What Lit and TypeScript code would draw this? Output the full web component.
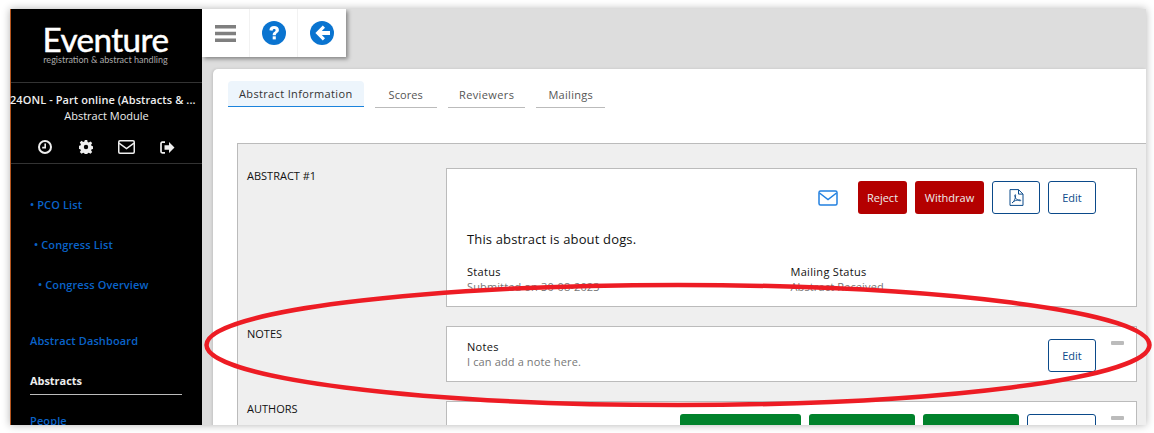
import { LitElement, html, css } from "lit";
import { customElement } from "lit/decorators.js";

const envelope = html`<svg viewBox="0 0 20 16" width="20" height="16"><rect x="1" y="1" width="18" height="14" rx="1.5" fill="none" stroke="currentColor" stroke-width="1.5"/><path d="M1.5 3 L10 9.5 L18.5 3" fill="none" stroke="currentColor" stroke-width="1.5"/></svg>`;

@customElement("app-root")
export class AppRoot extends LitElement {
  static styles = css`
    :host { display: block; width: 1154px; height: 433px; background: #fff; font-family: "Open Sans", sans-serif; font-size: 11px; color: #222; position: relative; overflow: hidden; }
    .window { position: absolute; left: 10px; top: 9px; width: 1136px; height: 416px; display: flex; overflow: hidden; box-shadow: 0 0 8px rgba(0,0,0,.3); background: #ddd; }
    .side { width: 192px; flex: none; background: #000; color: #fff; border-left: 1px solid #b5561f; box-sizing: border-box; display: flex; flex-direction: column; }
    .logo { flex: none; height: 74px; box-sizing: border-box; padding-top: 15px; padding-right: 2px; display: flex; flex-direction: column; align-items: center; border-bottom: 1px solid #333; }
    .logo b { font: 400 33.2px/30px Lato, sans-serif; letter-spacing: -.55px; color: #fff; -webkit-text-stroke: .5px #fff; }
    .logo span { font: 400 9.05px/11px Lato, sans-serif; color: #aaa; }
    .ctx { flex: none; text-align: center; padding-top: 9px; line-height: 16px; font-size: 11px; color: #eee; height: 81px; box-sizing: border-box; border-bottom: 1px solid #333; }
    .ctx .t { font-weight: 600; white-space: nowrap; margin: 0 8px 0 -1px; letter-spacing: .08px; }
    .tools { display: flex; justify-content: center; gap: 25px; align-items: center; margin-top: 14px; height: 18px; color: #eee; }
    .tools svg:first-child { margin-right: 2px; }
    nav { display: flex; flex-direction: column; padding: 33px 0 0 19px; font-weight: 600; font-size: 11px; color: #0a63c9; line-height: 16px; letter-spacing: .12px; }
    nav a { display: block; margin-bottom: 24px; white-space: nowrap; }
    nav a.i1 { padding-left: 4px; }
    nav a.i2 { padding-left: 8px; margin-bottom: 40px; }
    nav a.cur { color: #eee; font-weight: 700; width: 152px; padding-bottom: 5px; border-bottom: 1px solid #bbb; margin-bottom: 18px; letter-spacing: -.05px; }
    main { flex: 1; min-width: 0; position: relative; }
    .toolbar { width: 144px; height: 48px; background: #fff; display: flex; box-shadow: 2px 2px 4px rgba(0,0,0,.4); position: relative; }
    .toolbar div { width: 48px; display: flex; align-items: center; justify-content: center; border-right: 1px solid #f2f2f2; box-sizing: border-box; }
    .toolbar div:last-child { border-right: none; }
    .panel { margin: 12px 0 0 11px; height: 400px; background: #fff; border-radius: 5px 0 0 0; padding: 12px 0 0 15px; box-sizing: border-box; box-shadow: -1px 0 3px rgba(0,0,0,.12); }
    .tabs { display: flex; gap: 11px; color: #555; align-items: flex-start; letter-spacing: .1px; }
    .tab { height: 27px; padding: 0 14px; display: flex; align-items: center; border-bottom: 1px solid #bbb; box-sizing: border-box; }
    .tab.rv { padding: 0 11px; letter-spacing: .4px; }
    .tab.ml { padding: 0 12px; letter-spacing: .3px; }
    .tab.on { background: #edf5fc; border-bottom-color: #1b83dc; border-radius: 4px 4px 0 0; color: #333; font-weight: 500; padding: 0 11px 1px; height: 26px; letter-spacing: .35px; }
    .box { margin: 35px 0 0 9px; background: #efefef; border: 1px solid #bbb; border-right: none; padding: 24px 9px 0 9px; display: flex; flex-direction: column; gap: 19px; }
    .row { display: flex; }
    .lbl { width: 199px; flex: none; color: #111; line-height: 16px; }
    .card { flex: 1; background: #fff; border: 1px solid #bbb; box-sizing: border-box; position: relative; padding: 0 40px 0 20px; }
    .acts { display: flex; justify-content: flex-end; align-items: center; gap: 8px; }
    .btn { height: 33px; box-sizing: border-box; border-radius: 3px; display: flex; align-items: center; justify-content: center; font-size: 11px; }
    .red { background: #b40000; color: #eee; }
    .out { border: 1px solid #0b4a8a; color: #0b4a8a; background: #fff; }
    .green { background: #00822b; }
    .mail { color: #2280e0; margin-right: 12px; display: flex; }
    .h1 { font-size: 13px; font-weight: 500; color: #111; line-height: 18px; margin-top: 16px; letter-spacing: .15px; }
    .grid { display: grid; grid-template-columns: 323.5px 1fr; margin-top: 16px; line-height: 15px; }
    .k { color: #111; letter-spacing: .3px; }
    .v { color: #777; letter-spacing: .13px; }
    .min { position: absolute; right: 12px; top: 14px; width: 13px; height: 4px; background: #bbb; border-radius: 1px; }
    .note { display: flex; align-items: center; justify-content: space-between; height: 54px; line-height: 15px; }
    .ring { position: absolute; left: 0; top: 0; pointer-events: none; }
  `;

  render() {
    return html`
      <div class="window">
        <aside class="side">
          <div class="logo"><b>Eventure</b><span>registration &amp; abstract handling</span></div>
          <div class="ctx">
            <div class="t">24ONL - Part online (Abstracts &amp; ...</div>
            <div>Abstract Module</div>
            <div class="tools">
              <svg width="14" height="14" viewBox="0 0 14 14"><circle cx="7" cy="7" r="6" fill="none" stroke="currentColor" stroke-width="2"/><path d="M7.200 3.500V7.600H4.200" fill="none" stroke="currentColor" stroke-width="1.600"/></svg>
              <svg width="14" height="14" viewBox="0 0 14 14"><path fill="currentColor" fill-rule="evenodd" d="M5.800 0h2.400l.4 2 1.200.5 1.700-1.100 1.700 1.700-1.100 1.700.5 1.200 2 .4v2.400l-2 .4-.5 1.200 1.100 1.700-1.700 1.700-1.700-1.100-1.200.5-.4 2H5.800l-.4-2-1.200-.5-1.700 1.100-1.700-1.700 1.100-1.700-.5-1.200-2-.4V5.800l2-.4.5-1.200-1.100-1.700 1.700-1.700 1.700 1.100 1.200-.5zM7 4.800a2.200 2.200 0 1 0 0 4.400 2.200 2.200 0 0 0 0-4.400z"/></svg>
              <svg width="17" height="14" viewBox="0 0 17 14"><rect x=".75" y=".75" width="15.500" height="12.500" rx="1.200" fill="none" stroke="currentColor" stroke-width="1.500"/><path d="M1 3.200 8.500 8.600 16 3.200" fill="none" stroke="currentColor" stroke-width="1.500"/></svg>
              <svg width="15" height="13" viewBox="0 0 15 13"><path d="M5 1.200H2.200A1.200 1.200 0 0 0 1 2.400v8.200a1.200 1.200 0 0 0 1.200 1.200H5" fill="none" stroke="currentColor" stroke-width="1.700"/><path fill="currentColor" d="M4.500 4.200H9V1l5.500 5.500L9 12V8.800H4.500z"/></svg>
            </div>
          </div>
          <nav>
            <a>• PCO List</a>
            <a class="i1">• Congress List</a>
            <a class="i2">• Congress Overview</a>
            <a>Abstract Dashboard</a>
            <a class="cur">Abstracts</a>
            <a>People</a>
          </nav>
        </aside>
        <main>
          <div class="toolbar">
            <div><svg width="21" height="17" viewBox="0 0 21 17"><path fill="#7f7f7f" d="M0 0h21v3.500H0zM0 6.700h21v3.500H0zM0 13.500h21V17H0z"/></svg></div>
            <div><svg width="24" height="24" viewBox="0 0 24 24"><circle cx="12" cy="12" r="12" fill="#0a74d0"/><path d="M7.400 9.300c0-2.700 2-4.200 4.700-4.200 2.800 0 4.800 1.600 4.800 3.900 0 3-3.100 2.900-3.100 5.200h-3.100c0-3.500 2.900-3.200 2.900-4.900 0-.7-.5-1.200-1.400-1.200-.9 0-1.600.6-1.600 1.600z" fill="#fff"/><rect x="10.700" y="15.300" width="3.100" height="3.100" fill="#fff"/></svg></div>
            <div><svg width="24" height="24" viewBox="0 0 24 24"><circle cx="12" cy="12" r="12" fill="#0a74d0"/><path d="M20 10H11.800L15 6.800 12.800 4.600 5.400 12l7.400 7.400L15 17.200 11.800 14H20z" fill="#fff"/></svg></div>
          </div>
          <div class="panel">
            <div class="tabs">
              <div class="tab on">Abstract Information</div>
              <div class="tab">Scores</div>
              <div class="tab rv">Reviewers</div>
              <div class="tab ml">Mailings</div>
            </div>
            <div class="box">
              <div class="row">
                <div class="lbl">ABSTRACT #1</div>
                <div class="card" style="height:139px">
                  <div class="acts" style="margin-top:12px">
                    <span class="mail">${envelope}</span>
                    <div class="btn red" style="width:49px">Reject</div>
                    <div class="btn red" style="width:69px">Withdraw</div>
                    <div class="btn out" style="width:48px"><svg width="15" height="17" viewBox="0 0 15 17"><path d="M1 .6h8.500l4.500 4.500v11.300H1z M9.500 .6v4.500H14" fill="none" stroke="#0b4a8a" stroke-width="1"/><path d="M3 14c2-1 3.600-4.500 3.600-7.500 0-1.500-1-1-.8.5.4 3 3.200 4.800 5.400 4.800.8 0 .8-1-.5-1-2.500 0-6.200 1-7.700 3.200z" fill="none" stroke="#0b4a8a" stroke-width=".9"/></svg></div>
                    <div class="btn out" style="width:48px">Edit</div>
                  </div>
                  <div class="h1">This abstract is about dogs.</div>
                  <div class="grid">
                    <div><div class="k">Status</div><div class="v">Submitted on 30-08-2023</div></div>
                    <div><div class="k">Mailing Status</div><div class="v">Abstract Received</div></div>
                  </div>
                </div>
              </div>
              <div class="row">
                <div class="lbl">NOTES</div>
                <div class="card" style="height:56px">
                  <div class="note"><div><div class="k">Notes</div><div class="v">I can add a note here.</div></div><div class="btn out" style="width:48px;margin-top:2px">Edit</div></div>
                  <div class="min"></div>
                </div>
              </div>
              <div class="row">
                <div class="lbl">AUTHORS</div>
                <div class="card" style="height:80px">
                  <div class="acts" style="margin-top:12px">
                    <div class="btn green" style="width:121px"></div>
                    <div class="btn green" style="width:106px"></div>
                    <div class="btn green" style="width:96px"></div>
                    <div class="btn out" style="width:69px"></div>
                  </div>
                  <div class="min"></div>
                </div>
              </div>
            </div>
          </div>
        </main>
      </div>
      <svg class="ring" width="1154" height="433" viewBox="0 0 1154 433"><ellipse cx="678" cy="345" rx="471.500" ry="60" fill="none" stroke="#ed1c24" stroke-width="4.500"/></svg>
    `;
  }
}
